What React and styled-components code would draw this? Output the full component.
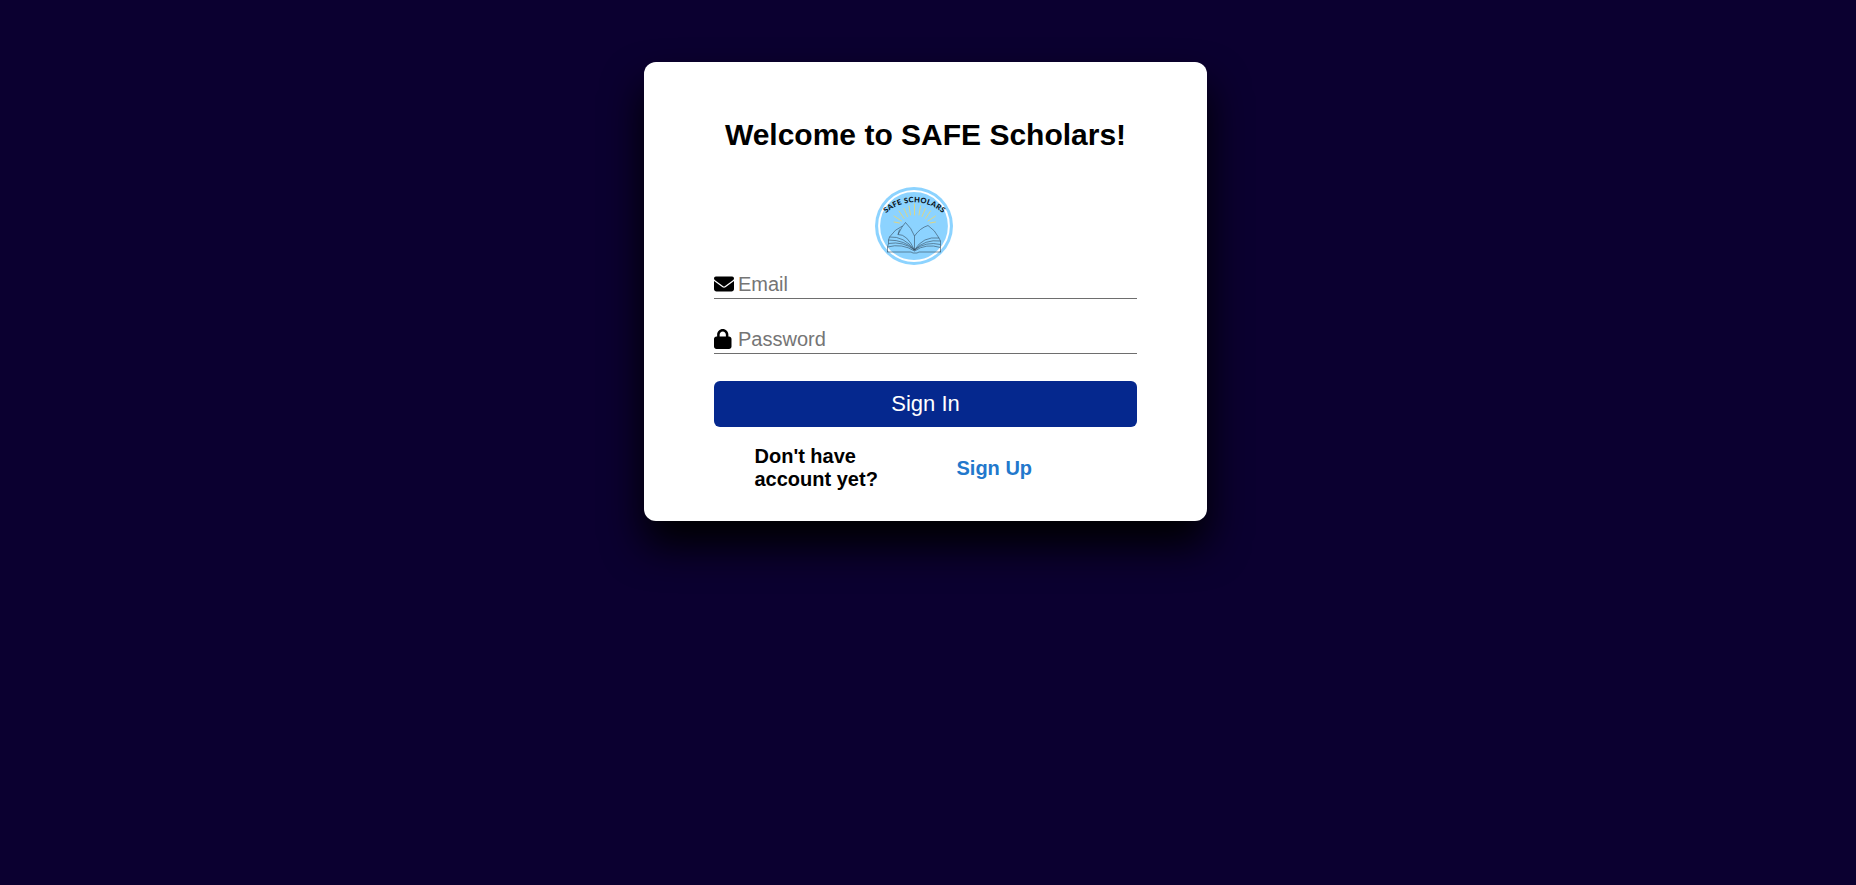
import React, { useState } from 'react';
import styled, { createGlobalStyle } from 'styled-components';
import { FaEnvelope, FaLock } from 'react-icons/fa6';

function Logo() {
  return (
    <StyledLogo viewBox="0 0 78 78" role="img" aria-label="Safe Scholars">
      <circle cx="39" cy="39" r="39" fill="#8cd3ff" />
      <circle cx="39" cy="39" r="34.900" fill="none" stroke="white" strokeWidth="2" />
      <defs>
        <path id="arc" d="M 8 29.5 A 42 42 0 0 1 71 29.5" />
      </defs>
      <g stroke="#f0d76a" strokeWidth="0.9" strokeLinecap="round" opacity="0.9">
        <path d="M39.500 17v11M34 19l1.500 9M45.500 19l-1.500 9M29 21.500l3.500 8M50.500 21.500l-3.500 8" />
        <path d="M24 24l5 7.500M55.500 24l-5 7.500M19 29l7.500 5M60.500 29l-7.500 5M19 35l5.500 1M60.500 35l-5.500 1" />
      </g>
      <StyledLogoText>
        <textPath href="#arc" startOffset="50%" textAnchor="middle">SAFE SCHOLARS</textPath>
      </StyledLogoText>
      <g fill="none" stroke="#34495c" strokeWidth="0.6" strokeLinejoin="round">
        <path d="M39.500 63V49Q36.500 41 30.500 35.500Q27 39 23 47.500Q32 47 39.500 63" />
        <path d="M27.500 39Q20 42 14.500 50Q29 49 39.500 63M23 47.500l1.500-5" />
        <path d="M39.500 49Q45 41 53 38.500Q60 43 64 51Q48 49 39.500 63" />
        <path d="M14.500 50l-1 3Q30 53 39.500 63M13.500 53v3.500Q28 54 39.500 63M13.500 56.500l-1 3.500Q27 56 39.500 64M12.500 60v5" />
        <path d="M64 51l1.500 3Q50 52 39.500 63M65.500 54v3.500Q51 54 39.500 63M65.500 57.500v3Q51 56 39.500 64M65.500 60.500v4.500" />
        <path d="M12 65H36l2 1h4l2-1h22" />
      </g>
    </StyledLogo>
  );
}

function App() {
  const [email, setEmail] = useState('');
  const [password, setPassword] = useState('');

  return (
    <>
      <GlobalStyle />
      <StyledCard onSubmit={(e) => e.preventDefault()}>
        <StyledTitle>Welcome to SAFE Scholars!</StyledTitle>
        <Logo />
        <StyledField>
          <FaEnvelope />
          <StyledInput
            type="email"
            placeholder="Email"
            value={email}
            onChange={(e) => setEmail(e.target.value)}
          />
        </StyledField>
        <StyledField>
          <FaLock preserveAspectRatio="xMinYMid meet" viewBox="0 0 448 512" />
          <StyledInput
            type="password"
            placeholder="Password"
            value={password}
            onChange={(e) => setPassword(e.target.value)}
          />
        </StyledField>
        <StyledButton type="submit">Sign In</StyledButton>
        <StyledFooter>
          <StyledQuestion>Don't have account yet?</StyledQuestion>
          <StyledLink href="#signup">Sign Up</StyledLink>
        </StyledFooter>
      </StyledCard>
    </>
  );
}

const GlobalStyle = createGlobalStyle`
* {
  box-sizing: border-box;
}

body {
  margin: 0;
  min-height: 100vh;
  background-color: #0b0030;
  font-family: Arial, "Liberation Sans", sans-serif;
}
`;

const StyledCard = styled.form`
width: 563px;
height: 459px;
margin: 62px 0 0 644px;
padding: 56px 70px 0;
display: flex;
flex-direction: column;
background-color: white;
border-radius: 12px;
box-shadow: 0 24px 40px black;
`;

const StyledTitle = styled.h1`
margin: 0;
font-size: 30px;
line-height: 34px;
text-align: center;
white-space: nowrap;
`;

const StyledLogo = styled.svg`
width: 78px;
height: 78px;
flex-shrink: 0;
margin: 35px 0 6px 161px;
`;

const StyledLogoText = styled.text`
font-family: Lato, sans-serif;
font-size: 7.5px;
font-weight: 900;
letter-spacing: 0.25px;
fill: #0a141c;
`;

const StyledField = styled.label`
height: 28px;
margin-bottom: 27px;
display: flex;
align-items: center;
border-bottom: 1px solid #6e6e6e;

svg {
  flex-shrink: 0;
  width: 20px;
  height: 20px;
  margin-bottom: 1px;
}
`;

const StyledInput = styled.input`
flex: 1;
min-width: 0;
padding: 0 0 0 4px;
border: none;
outline: none;
font-family: inherit;
font-size: 20px;

&::placeholder {
  color: #757575;
}
`;

const StyledButton = styled.button`
height: 46px;
flex-shrink: 0;
border: none;
border-radius: 6px;
background-color: #05288e;
color: white;
font-family: inherit;
font-size: 22px;
cursor: pointer;
`;

const StyledFooter = styled.div`
margin: 18px 0 0 40.5px;
display: flex;
align-items: center;
font-size: 20px;
font-weight: 700;
line-height: 23px;
`;

const StyledQuestion = styled.span`
width: 202px;
padding-right: 60px;
`;

const StyledLink = styled.a`
color: #2278cc;
text-decoration: none;
`;

export default App;
